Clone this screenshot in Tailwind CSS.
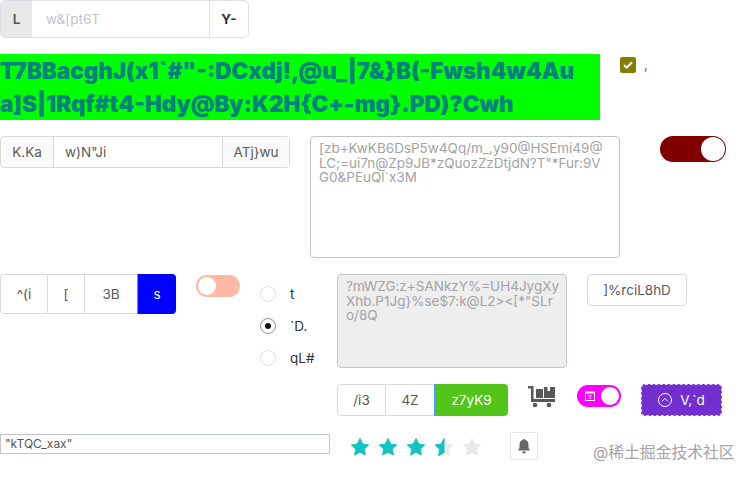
<!DOCTYPE html>
<html lang="en">
<head>
  <meta charset="UTF-8" />
  <title>Components</title>
  <script src="https://cdn.jsdelivr.net/npm/@tailwindcss/browser@4"></script>
</head>
<body class="bg-white font-['Inter','Noto_Sans_CJK_SC',sans-serif] text-[13.5px] text-[#595959] overflow-hidden">
<div class="relative w-[750px] h-[478px]">

  <!-- row 1 -->
  <div class="flex h-[38px] w-[249px] border border-[#dcdfe6] rounded-[5px] overflow-hidden">
    <div class="w-[31px] bg-[#e8e8e8] flex items-center justify-center font-semibold text-[#555]">L</div>
    <div class="flex-1 flex items-center pl-[14px] text-[#c0c4cc]">w&amp;[pt6T</div>
    <div class="w-[39px] border-l border-[#dcdfe6] flex items-center justify-center font-bold text-[#303133]">Y-</div>
  </div>

  <!-- row 2 -->
  <div class="flex mt-4 h-[66px]">
    <div class="w-[600px] bg-[#00ff00] text-[#008080] font-black text-[22.400px] leading-[33px] break-all">T7BBacghJ(x1`#"-:DCxdj!,@u_|7&amp;}B(-Fwsh4w4Au<br>a]S|1Rqf#t4-Hdy@By:K2H{C+-mg}.PD)?Cwh</div>
    <div class="ml-5 mt-[3px] w-4 h-4 bg-[#808000] rounded-[2px] flex items-center justify-center">
      <svg width="10" height="8" viewBox="0 0 10 8" fill="none"><path d="M1 4l2.600 2.600L9 1.200" stroke="#fff" stroke-width="2"/></svg>
    </div>
    <div class="ml-2 mt-px text-[#606266] leading-[20px]">,</div>
  </div>

  <!-- row 3 -->
  <div class="flex mt-4 h-[122px]">
    <div class="flex h-8 w-[290px] border border-[#d9d9d9] rounded-[4px] overflow-hidden">
      <div class="w-[53px] bg-[#fafafa] border-r border-[#d9d9d9] flex items-center justify-center">K.Ka</div>
      <div class="flex-1 flex items-center pl-[11px]">w)N"Ji</div>
      <div class="w-[67px] bg-[#fafafa] border-l border-[#d9d9d9] flex items-center justify-center">ATj}wu</div>
    </div>
    <div class="ml-5 w-[310px] h-[122px] border border-[#c0c4cc] rounded-[4px] pl-2 pr-[14px] py-1 text-[#a3a3a3] leading-[14.500px] break-all">[zb+KwKB6DsP5w4Qq/m_,y90@HSEmi49@LC;=ui7n@Zp9JB*zQuozZzDtjdN?T"*Fur:9VG0&amp;PEuQl`x3M</div>
    <div class="ml-10 w-[66px] h-[26px] rounded-full bg-[#800000] flex items-center justify-end pr-px">
      <div class="w-6 h-6 rounded-full bg-white"></div>
    </div>
  </div>

  <!-- row 4 -->
  <div class="flex mt-4 h-[94px]">
    <div class="flex h-10 w-[176px] rounded-[4px] overflow-hidden">
      <div class="w-[48px] border border-[#d9d9d9] rounded-l-[4px] flex items-center justify-center">^(i</div>
      <div class="w-[37px] border-y border-r border-[#d9d9d9] flex items-center justify-center">[</div>
      <div class="w-[52px] border-y border-[#d9d9d9] flex items-center justify-center">3B</div>
      <div class="flex-1 bg-[#0000ff] border-l border-[#409eff] text-white flex items-center justify-center">s</div>
    </div>
    <div class="ml-5 mt-px w-11 h-[22px] rounded-full bg-[#ffb8a3] flex items-center pl-[2px]">
      <div class="w-[18px] h-[18px] rounded-full bg-white"></div>
    </div>
    <div class="ml-5 mt-1 w-[77px] flex flex-col">
      <div class="flex items-center h-8 shrink-0 text-[#303133]"><span class="w-4 h-4 rounded-full border border-[#dcdfe6]"></span><span class="ml-[14px]">t</span></div>
      <div class="flex items-center h-8 shrink-0 text-[#303133]"><span class="w-4 h-4 rounded-full border border-[#909399] flex items-center justify-center"><span class="w-[6px] h-[6px] rounded-full bg-[#111]"></span></span><span class="ml-[14px]">`D.</span></div>
      <div class="flex items-center h-8 shrink-0 text-[#303133]"><span class="w-4 h-4 rounded-full border border-[#dcdfe6]"></span><span class="ml-[14px]">qL#</span></div>
    </div>
    <div class="w-[230px] h-[94px] bg-[#eeeeef] border border-[#c0c4cc] rounded-[4px] pl-2 pr-[6px] py-1 text-[#a3a3a3] leading-[14.500px] break-all">?mWZG:z+SANkzY%=UH4JygXy<br>Xhb.P1Jg}%se$7:k@L2&gt;&lt;[*"SLr<br>o/8Q</div>
    <div class="ml-5 w-[100px] h-8 border border-[#d9d9d9] rounded-[4px] flex items-center justify-center">]%rciL8hD</div>
  </div>

  <!-- row 5 -->
  <div class="flex mt-4 pl-[337px] h-8">
    <div class="flex w-[171px] h-8 rounded-[4px] overflow-hidden">
      <div class="w-[49px] border border-[#d9d9d9] rounded-l-[4px] flex items-center justify-center">/i3</div>
      <div class="w-[48px] border-y border-[#d9d9d9] flex items-center justify-center">4Z</div>
      <div class="flex-1 bg-[#52c41a] border-l border-[#409eff] text-white flex items-center justify-center">z7yK9</div>
    </div>
    <svg class="ml-5 mt-[2px]" width="27" height="22" viewBox="0 0 27 22" fill="#595959">
      <path d="M0 0h5.500v13H27v3H3V2.500H0z"/>
      <path d="M8 3h7v9H8z"/>
      <path d="M16 1h3.500v4h2.500V1h5v11H16z"/>
      <circle cx="7" cy="19" r="2.300"/>
      <circle cx="21" cy="19" r="2.300"/>
    </svg>
    <div class="ml-[22px] mt-px w-11 h-[22px] rounded-full bg-[#ff00ff] flex items-center justify-between pl-2 pr-[2px]">
      <svg width="10" height="10" viewBox="0 0 10 10" fill="none" stroke="#fff"><rect x=".5" y="1.500" width="9" height="8"/><path d="M0 1.500h10" stroke-width="2"/><path d="M3 4l2 1.500L7 4M5 5.500v2.500"/></svg>
      <div class="w-[18px] h-[18px] rounded-full bg-white"></div>
    </div>
    <div class="ml-5 w-[81px] h-8 bg-[#722ed1] border border-dashed border-[#d9d9d9] rounded-[4px] flex items-center justify-center text-white">
      <svg width="14" height="14" viewBox="0 0 14 14" fill="none" stroke="#fff"><circle cx="7" cy="7" r="6.500"/><path d="M4.200 8.200L7 5.400l2.800 2.800"/></svg>
      <span class="ml-2">V,`d</span>
    </div>
  </div>

  <!-- row 6 -->
  <div class="flex items-start mt-4">
    <div class="mt-[2px] w-[330px] h-5 border border-[#c0c4cc] pl-1 flex items-center text-[12px] text-[#555]">"kTQC_xax"</div>
    <div class="ml-5 mt-[5px] flex gap-2 items-center">
      <svg width="20" height="20" viewBox="0 0 20 20" fill="#13c2c2" stroke="#13c2c2" stroke-linejoin="round"><path d="M10 1.500l2.700 5.600 6 .800-4.400 4.200 1.100 6-5.400-2.900-5.400 2.900 1.100-6L1.300 7.900l6-.8z"/></svg>
      <svg width="20" height="20" viewBox="0 0 20 20" fill="#13c2c2" stroke="#13c2c2" stroke-linejoin="round"><path d="M10 1.500l2.700 5.600 6 .800-4.400 4.200 1.100 6-5.400-2.900-5.400 2.900 1.100-6L1.300 7.900l6-.8z"/></svg>
      <svg width="20" height="20" viewBox="0 0 20 20" fill="#13c2c2" stroke="#13c2c2" stroke-linejoin="round"><path d="M10 1.500l2.700 5.600 6 .800-4.400 4.200 1.100 6-5.400-2.900-5.400 2.900 1.100-6L1.300 7.900l6-.8z"/></svg>
      <svg width="20" height="20" viewBox="0 0 20 20" stroke-linejoin="round"><path fill="#e8e8e8" stroke="#e8e8e8" d="M10 1.500l2.700 5.600 6 .800-4.400 4.200 1.100 6-5.400-2.900-5.400 2.900 1.100-6L1.300 7.900l6-.8z"/><path fill="#13c2c2" stroke="#13c2c2" d="M10 1.500v14.200l-5.400 2.900 1.100-6L1.300 7.900l6-.8z"/></svg>
      <svg width="20" height="20" viewBox="0 0 20 20" fill="#e8e8e8" stroke="#e8e8e8" stroke-linejoin="round"><path d="M10 1.500l2.700 5.600 6 .800-4.400 4.200 1.100 6-5.400-2.900-5.400 2.900 1.100-6L1.300 7.900l6-.8z"/></svg>
    </div>
    <div class="ml-7 w-7 h-7 border border-[#e8e8e8] flex items-center justify-center">
      <svg width="14" height="15" viewBox="0 0 14 15" fill="#666"><path d="M7 0c.7 0 1.100.5 1.100 1.100C10.300 1.600 11.500 3.400 11.500 5.500V9l1.500 2.500H1L2.500 9V5.500C2.500 3.400 3.700 1.600 5.900 1.100 5.900.5 6.300 0 7 0z"/><path d="M5 12.500h4a2 2 0 0 1-4 0z"/></svg>
    </div>
  </div>

  <!-- watermark -->
  <div class="absolute left-[593px] top-[443px] text-[15.800px] leading-[20px] text-[#a3a3a3] [text-shadow:0_0_1px_#fff]">@稀土掘金技术社区</div>
</div>
</body>
</html>
